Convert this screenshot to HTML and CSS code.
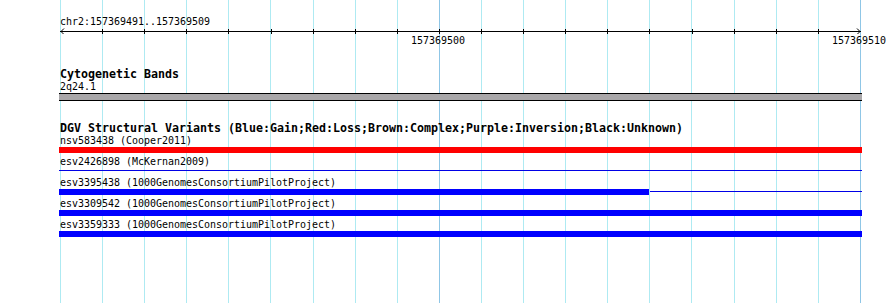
FILE: index.html
```html
<!DOCTYPE html>
<html lang="en">
<head>
  <meta charset="UTF-8">
  <title>Genome Browser Detail</title>
  <link rel="stylesheet" href="styles.css">
</head>
<body>
  <div class="panel">
    <!-- grid lines, one per base -->
    <div class="grid">
      <span class="gl"></span><span class="gl"></span><span class="gl"></span><span class="gl"></span><span class="gl"></span>
      <span class="gl"></span><span class="gl"></span><span class="gl"></span><span class="gl"></span><span class="gl major"></span>
      <span class="gl"></span><span class="gl"></span><span class="gl"></span><span class="gl"></span><span class="gl"></span>
      <span class="gl"></span><span class="gl"></span><span class="gl"></span><span class="gl"></span><span class="gl major"></span>
    </div>

    <div class="ruler">
      <div class="ruler-title">chr2:157369491..157369509</div>
      <svg class="axis" width="890" height="6" viewBox="0 0 890 6">
        <g stroke="#000" stroke-width="1" fill="none" shape-rendering="crispEdges">
          <line x1="60" y1="3.5" x2="861" y2="3.5"/>
          <path d="M102.5 1V6M144.5 1V6M186.5 1V6M228.5 1V6M271.5 1V6M313.5 1V6M355.5 1V6M397.5 1V6M439.5 1V6M481.5 1V6M523.5 1V6M565.5 1V6M607.5 1V6M649.5 1V6M692.5 1V6M734.5 1V6M776.5 1V6M818.5 1V6"/>
        </g>
        <g stroke="#000" stroke-width="1" fill="none">
          <path d="M64 0.5L61 3.5L64 6.5"/>
          <path d="M857 0.5L860 3.5L857 6.5"/>
        </g>
      </svg>
      <div class="axis-labels">
        <span class="tick-label" style="left:411px">157369500</span>
        <span class="tick-label" style="left:832px">157369510</span>
      </div>
    </div>

    <div class="track track-first">
      <div class="track-title">Cytogenetic Bands</div>
      <div class="feature">
        <div class="feature-label">2q24.1</div>
        <div class="band"></div>
      </div>
    </div>

    <div class="track">
      <div class="track-title">DGV Structural Variants (Blue:Gain;Red:Loss;Brown:Complex;Purple:Inversion;Black:Unknown)</div>
      <div class="feature">
        <div class="feature-label">nsv583438 (Cooper2011)</div>
        <div class="bar"><div class="seg seg-loss" style="width:803px"></div></div>
      </div>
      <div class="feature">
        <div class="feature-label">esv2426898 (McKernan2009)</div>
        <div class="bar"><div class="seg-thin"></div></div>
      </div>
      <div class="feature">
        <div class="feature-label">esv3395438 (1000GenomesConsortiumPilotProject)</div>
        <div class="bar"><div class="seg seg-gain" style="width:590px"></div><div class="seg-thin"></div></div>
      </div>
      <div class="feature">
        <div class="feature-label">esv3309542 (1000GenomesConsortiumPilotProject)</div>
        <div class="bar"><div class="seg seg-gain" style="width:803px"></div></div>
      </div>
      <div class="feature">
        <div class="feature-label">esv3359333 (1000GenomesConsortiumPilotProject)</div>
        <div class="bar"><div class="seg seg-gain" style="width:803px"></div></div>
      </div>
    </div>
  </div>
</body>
</html>
```

FILE: styles.css
```css
* {
  box-sizing: border-box;
}
body {
  margin: 0;
  background: #fff;
  font-family: "DejaVu Sans Mono", monospace;
  color: #000;
}
.panel {
  position: relative;
  width: 890px;
  height: 303px;
  overflow: hidden;
  padding-top: 15px;
}
.grid {
  position: absolute;
  top: 0;
  bottom: 0;
  left: 60px;
  width: 801px;
  display: flex;
  justify-content: space-between;
  z-index: 0;
}
.gl {
  width: 1px;
  background: #aeeaf2;
}
.gl.major {
  background: #8fc6e6;
}
.ruler,
.track {
  position: relative;
  z-index: 1;
}
.ruler-title {
  padding-left: 60px;
  font-size: 9.97px;
  line-height: 13px;
  white-space: nowrap;
}
.axis {
  display: block;
}
.axis-labels {
  position: relative;
  height: 13px;
}
.tick-label {
  position: absolute;
  top: 0;
  font-size: 9.97px;
  line-height: 13px;
  white-space: nowrap;
}
.track {
  margin-top: 21px;
  padding-left: 60px;
}
.track-title {
  font-size: 11.63px;
  font-weight: bold;
  line-height: 12px;
  margin-bottom: 1px;
  white-space: nowrap;
}
.feature {
  margin-bottom: 3px;
}
.feature-label {
  font-size: 9.97px;
  line-height: 11px;
  margin-bottom: 1px;
  white-space: nowrap;
}
.band {
  margin-left: -1px;
  width: 803px;
  height: 8px;
  background: #a9a7a9;
  border-top: 1px solid #000;
  border-bottom: 1px solid #000;
}
.bar {
  position: relative;
  margin-left: -1px;
  width: 803px;
  height: 6px;
  display: flex;
}
.seg {
  height: 6px;
  flex: none;
}
.seg-loss {
  background: #ff0000;
}
.seg-gain {
  background: #0000ff;
}
.seg-thin {
  flex: 1;
  height: 1px;
  margin-top: 2px;
  background: #0000e6;
}
.seg + .seg-thin {
  margin-left: 1px;
}
```
